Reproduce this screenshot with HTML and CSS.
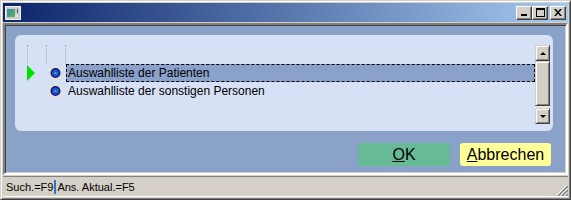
FILE: index.html
```html
<!DOCTYPE html>
<html lang="de">
<head>
  <meta charset="UTF-8" />
  <title>Auswahl</title>
  <link rel="stylesheet" href="styles.css">
</head>
<body>

  <div class="window">
    <div class="titlebar">
      <svg class="app-icon" width="16" height="14" viewBox="0 0 16 14">
        <rect x="0.5" y="0.5" width="15" height="13" fill="#d4d0c8" stroke="#f0f0f0"/>
        <rect x="2" y="2" width="12" height="10" fill="#c8c8c8"/>
        <defs>
          <linearGradient id="ig" x1="0" y1="0" x2="1" y2="1">
            <stop offset="0" stop-color="#3a8f9a"/>
            <stop offset="1" stop-color="#5fae6a"/>
          </linearGradient>
        </defs>
        <rect x="2" y="3" width="8" height="8" fill="url(#ig)"/>
        <rect x="12" y="3" width="1" height="4" fill="#207070"/>
        <rect x="10" y="9" width="3" height="2" fill="#e8e8e8"/>
      </svg>
      <div class="caption-buttons">
        <div class="cap-btn">
          <svg width="8" height="7" viewBox="0 0 8 7"><rect x="1" y="5" width="6" height="2" fill="#000"/></svg>
        </div>
        <div class="cap-btn">
          <svg width="9" height="9" viewBox="0 0 9 9"><rect x="0.5" y="1" width="8" height="7.5" fill="none" stroke="#000"/><rect x="0" y="0" width="9" height="2" fill="#000"/></svg>
        </div>
        <div class="cap-btn close-btn">
          <svg width="8" height="7" viewBox="0 0 8 7"><path d="M0 0h2l2 2.5 2-2.5h2l-3 3.5 3 3.5h-2l-2-2.5-2 2.5h-2l3-3.5z" fill="#000"/></svg>
        </div>
      </div>
    </div>

    <div class="client">
      <div class="panel">
        <div class="list">
          <div class="list-head">
            <div class="head-cell"></div>
            <div class="head-cell"></div>
            <div class="head-cell last"></div>
          </div>
          <div class="row selected">
            <div class="cell-mark"><span class="arrow"></span></div>
            <div class="cell-icon">
              <svg width="13" height="12" viewBox="0 0 13 12">
                <rect width="13" height="12" fill="#e6e2d2"/>
                <circle cx="6.5" cy="6" r="5" fill="#0a1a8a"/>
                <circle cx="6.5" cy="6" r="3.6" fill="#1f4fc8"/>
                <path d="M4.5 6.8l2-2.3 2 2.3z" fill="#3fb8b0"/>
              </svg>
            </div>
            <div class="cell-text">Auswahlliste der Patienten</div>
          </div>
          <div class="row">
            <div class="cell-mark"></div>
            <div class="cell-icon">
              <svg width="13" height="12" viewBox="0 0 13 12">
                <rect width="13" height="12" fill="#e6e2d2"/>
                <circle cx="6.5" cy="6" r="5" fill="#0a1a8a"/>
                <circle cx="6.5" cy="6" r="3.6" fill="#1f4fc8"/>
                <path d="M4.5 6.8l2-2.3 2 2.3z" fill="#3fb8b0"/>
              </svg>
            </div>
            <div class="cell-text">Auswahlliste der sonstigen Personen</div>
          </div>
        </div>

        <div class="scrollbar">
          <div class="sb-btn"><span class="tri up"></span></div>
          <div class="sb-thumb"></div>
          <div class="sb-track"></div>
          <div class="sb-btn"><span class="tri down"></span></div>
        </div>
      </div>

      <div class="actions">
        <button class="btn btn-ok"><u>O</u>K</button>
        <button class="btn btn-cancel"><u>A</u>bbrechen</button>
      </div>
    </div>

    <div class="statusbar">
      Such.=F9<span class="sep"></span>Ans. Aktual.=F5
      <svg class="grip" width="12" height="12" viewBox="0 0 12 12">
        <path d="M11 1L1 11M11 5L5 11M11 9L9 11" stroke="#fff" stroke-width="1"/>
        <path d="M12 2L2 12M12 6L6 12M12 10L10 12" stroke="#808080" stroke-width="1.4"/>
      </svg>
    </div>
  </div>

</body>
</html>
```

FILE: styles.css
```css
* {
  box-sizing: border-box;
  margin: 0;
  padding: 0;
}

body {
  font-family: "Liberation Sans", Arial, sans-serif;
  background-color: #d4d0c8;
}

.window {
  width: 571px;
  height: 200px;
  background-color: #d4d0c8;
  border: 1px solid;
  border-color: #d4d0c8 #404040 #404040 #d4d0c8;
  box-shadow: inset 1px 1px #fff, inset -1px -1px #808080;
  padding: 2px;
  display: flex;
  flex-direction: column;
}

.titlebar {
  height: 19px;
  margin-bottom: 1px;
  background: linear-gradient(to right, #0a246a, #a6caf0);
  display: flex;
  align-items: center;
  justify-content: space-between;
  padding: 0 2px 0 2px;
}

.app-icon {
  display: block;
}

.caption-buttons {
  display: flex;
  align-items: center;
}

.cap-btn {
  width: 16px;
  height: 14px;
  background-color: #d4d0c8;
  border: 1px solid;
  border-color: #fff #404040 #404040 #fff;
  box-shadow: inset -1px -1px #808080;
  display: flex;
  align-items: center;
  justify-content: center;
}

.cap-btn svg {
  display: block;
}

.close-btn {
  margin-left: 2px;
}

.client {
  height: 152px;
  border: 2px solid;
  border-color: #808080 #fff #fff #808080;
  box-shadow: inset 1px 1px #404040, inset -1px -1px #d4d0c8;
  background-color: #8aa2c8;
  display: flex;
  flex-direction: column;
}

.panel {
  height: 96px;
  margin: 10px 13px 0 10px;
  background-color: #d6e1f6;
  border-radius: 6px;
  padding: 10px 3px 0 12px;
  display: flex;
}

.list {
  flex: 1;
  font-size: 12px;
  color: #000;
}

.list-head {
  display: flex;
  height: 19px;
}

.head-cell {
  width: 19px;
  height: 18px;
  border-left: 1px dotted #a8a8a8;
}

.row {
  display: flex;
  height: 18px;
  align-items: center;
}

.cell-mark {
  width: 19px;
  height: 18px;
  display: flex;
  align-items: center;
}

.arrow {
  display: block;
  width: 0;
  height: 0;
  border-top: 8.5px solid transparent;
  border-bottom: 8.5px solid transparent;
  border-left: 8px solid #00e000;
}

.cell-icon {
  width: 19px;
  display: flex;
  padding-left: 3px;
}

.cell-icon svg {
  display: block;
}

.cell-text {
  flex: 1;
  height: 18px;
  margin-left: 1px;
  padding-left: 1px;
  line-height: 16px;
  border: 1px solid transparent;
  white-space: nowrap;
}

.row.selected .cell-text {
  background-color: #8aa2cb;
  border: 1px dashed #000;
}

.scrollbar {
  width: 15px;
  height: 79px;
  display: flex;
  flex-direction: column;
}

.sb-btn,
.sb-thumb {
  background-color: #d4d0c8;
  border: 1px solid;
  border-color: #d4d0c8 #404040 #404040 #d4d0c8;
  box-shadow: inset 1px 1px #fff, inset -1px -1px #808080;
}

.sb-btn {
  height: 16px;
  display: flex;
  align-items: center;
  justify-content: center;
}

.sb-thumb {
  height: 45px;
}

.sb-track {
  height: 2px;
  background: repeating-conic-gradient(#fff 0 25%, #d4d0c8 0 50%) 0 0 / 2px 2px;
}

.tri {
  display: block;
  width: 0;
  height: 0;
  border-left: 3px solid transparent;
  border-right: 3px solid transparent;
}

.tri.up {
  border-bottom: 3px solid #000;
}

.tri.down {
  border-top: 3px solid #000;
}

.actions {
  display: flex;
  justify-content: flex-end;
  gap: 10px;
  margin-top: 12px;
  padding-right: 15px;
}

.btn {
  height: 23px;
  border: none;
  border-radius: 3px;
  font-family: "Liberation Sans", Arial, sans-serif;
  font-size: 16px;
  color: #000;
  line-height: 23px;
}

.btn-ok {
  width: 92px;
  background-color: #66bb96;
}

.btn-cancel {
  width: 91px;
  background-color: #ffff99;
}

.statusbar {
  margin-top: 1px;
  height: 21px;
  border-top: 1px solid #808080;
  border-bottom: 1px solid #fff;
  font-size: 11px;
  color: #000;
  padding-left: 3px;
  display: flex;
  align-items: center;
  position: relative;
}

.sep {
  display: inline-block;
  width: 2px;
  height: 14px;
  background-color: #3a6fc8;
  margin: 0 1px;
}

.grip {
  position: absolute;
  right: 0;
  bottom: 0;
}
```
